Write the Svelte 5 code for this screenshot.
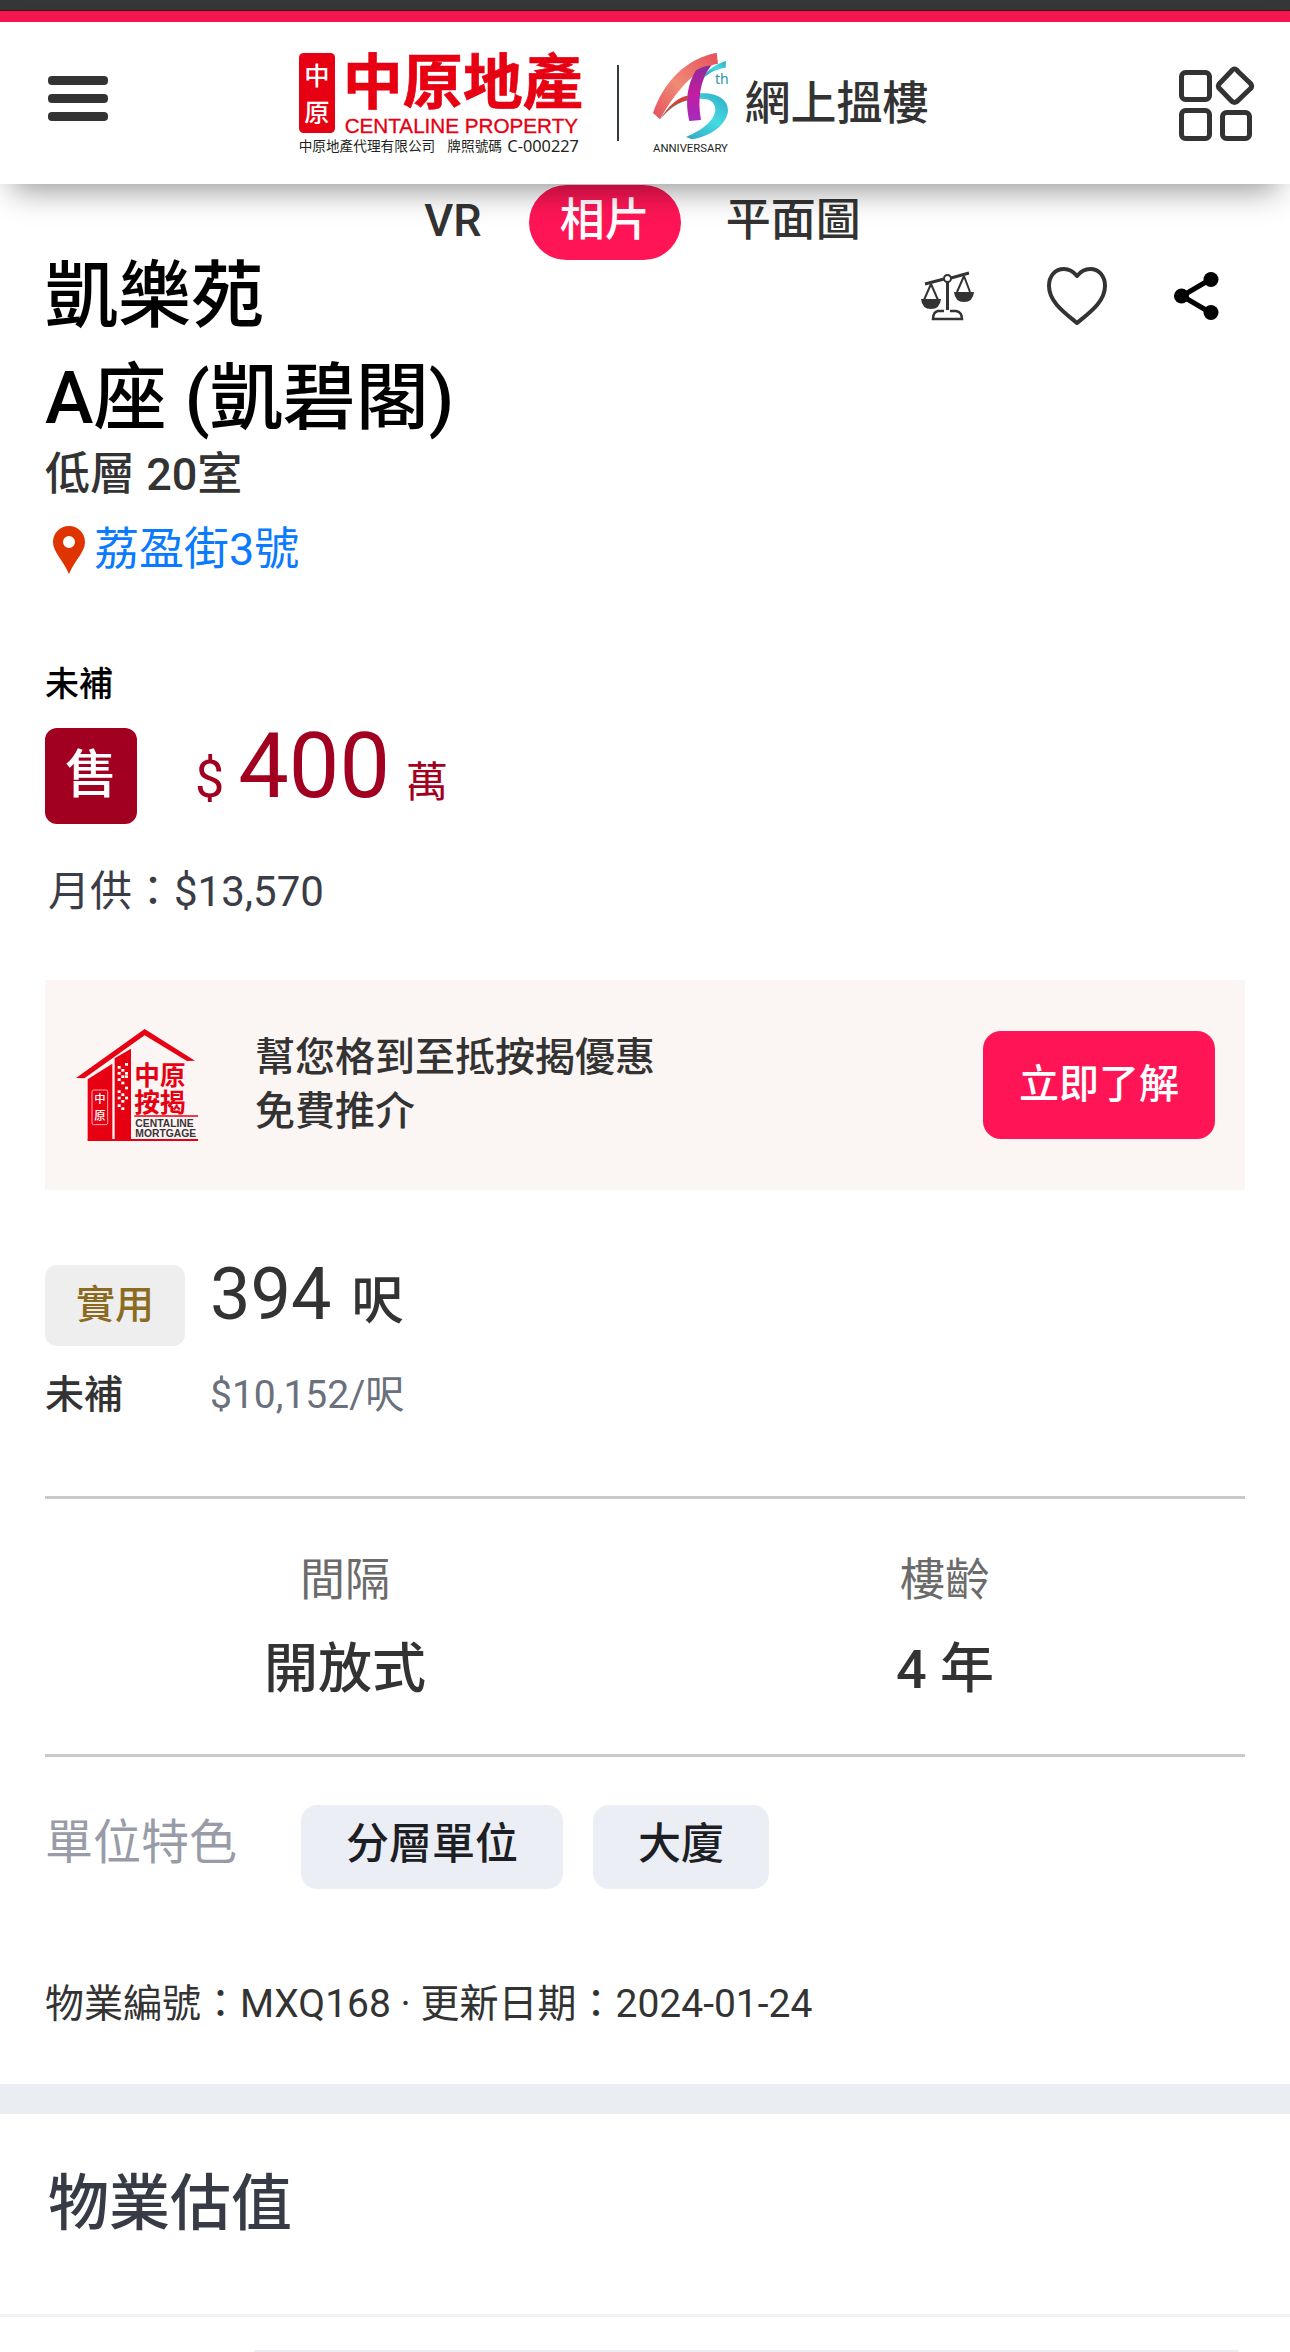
<script>
  const tabs = [
    { label: 'VR', active: false },
    { label: '相片', active: true },
    { label: '平面圖', active: false }
  ];
  const stats = [
    { label: '間隔', value: '開放式' },
    { label: '樓齡', value: '4 年' }
  ];
  const features = ['分層單位', '大廈'];
  const windows = [
    [254, 279], [232, 288], [243, 297], [254, 306], [254, 316], [232, 306],
    [243, 316], [232, 325], [243, 335], [254, 350], [232, 361], [243, 370],
    [232, 380], [254, 380], [243, 390], [232, 403], [243, 412]
  ];
</script>

<main lang="zh-HK">
  <div class="status"></div>
  <header>
    <button class="plain" aria-label="選單">
      <svg width="60" height="54" viewBox="0 0 60 54" fill="#333">
        <rect width="60" height="9" rx="4" />
        <rect y="18" width="60" height="9" rx="4" />
        <rect y="36" width="60" height="9" rx="4" />
      </svg>
    </button>

    <a class="brand" href="#home" aria-label="中原地產">
      <svg width="281" height="100" viewBox="57 42 843 300">
        <rect x="57" y="42" width="108" height="240" rx="14" fill="#e60012" />
        <g fill="#fff" font-size="76" text-anchor="middle" class="cjk" font-weight="500">
          <text x="111" y="139">中</text>
          <text x="111" y="250">原</text>
        </g>
        <text class="cjk" x="188" y="194" font-size="180" font-weight="700" fill="#e60012" stroke="#e60012" stroke-width="2">中原地產</text>
        <text class="latin" x="194" y="281" font-size="62" fill="#e60012" stroke="#e60012" stroke-width="1">CENTALINE PROPERTY</text>
        <g fill="#231f20" class="cjk">
          <text x="56" y="337" font-size="41">中原地產代理有限公司</text>
          <text x="502" y="337" font-size="41">牌照號碼</text>
          <text class="noto" x="682" y="339" font-size="49">C-000227</text>
        </g>
      </svg>
      <span class="divider"></span>
      <svg width="76" height="100" viewBox="99 42 228 300">
        <defs>
          <linearGradient id="red" x1="0" y1="1" x2="1" y2="0">
            <stop offset="0" stop-color="#e4505c" />
            <stop offset="0.45" stop-color="#f08a76" />
            <stop offset="1" stop-color="#e4505a" />
          </linearGradient>
          <linearGradient id="teal" x1="0" y1="1" x2="1" y2="0">
            <stop offset="0" stop-color="#2590b4" />
            <stop offset="0.6" stop-color="#45dbe2" />
            <stop offset="1" stop-color="#2fa9c4" />
          </linearGradient>
          <linearGradient id="purple" x1="0" y1="0" x2="0" y2="1">
            <stop offset="0" stop-color="#8d2a9c" />
            <stop offset="0.5" stop-color="#c31d9e" />
            <stop offset="1" stop-color="#a42bc0" />
          </linearGradient>
        </defs>
        <path d="M122 238C150 196 180 168 240 163C292 160 324 182 324 214C322 258 268 294 215 301L198 294C250 272 286 242 286 210C284 184 262 176 228 180C190 184 160 196 122 238Z" fill="url(#teal)" />
        <path d="M122 239C148 198 172 176 202 170V184C172 190 148 208 122 239Z" fill="#d8402f" />
        <path d="M99 222C132 126 200 58 290 41L294 74C236 84 176 140 120 241Z" fill="url(#red)" />
        <path d="M228 94Q248 82 274 79C240 122 232 182 243 243L208 246C194 190 202 134 228 94Z" fill="url(#purple)" />
        <path d="M250 118C258 94 290 74 318 66L317 86C290 90 268 100 250 118Z" fill="url(#teal)" />
        <text class="noto" x="285" y="135" font-size="42" fill="#2b93ad">th</text>
        <text class="roboto" x="99" y="340" font-size="34" fill="#231f20">ANNIVERSARY</text>
      </svg>
      <span class="site">網上搵樓</span>
    </a>

    <button class="plain" aria-label="更多服務">
      <svg width="75" height="75" viewBox="0 0 75 75" fill="none" stroke="#333" stroke-width="5">
        <rect x="2.500" y="6.500" width="28" height="27" rx="4" />
        <path d="M52 5.500Q55.500 0.500 59 5.500L71 17Q74.500 20 71 23L59 34.500Q55.500 38.500 52 34.500L41 23Q37.500 20 41 17Z" stroke-linejoin="round" />
        <rect x="2.500" y="44.500" width="28" height="28" rx="4" />
        <rect x="43.500" y="46.500" width="27" height="26" rx="4" />
      </svg>
    </button>
  </header>

  <nav class="tabs">
    {#each tabs as tab}
      <button class="tab" class:active={tab.active}>{tab.label}</button>
    {/each}
  </nav>

  <section class="listing">
    <div class="title-row">
      <h1><span>凱樂苑</span><span>A座 (凱碧閣)</span></h1>
      <div class="actions">
        <button class="plain" aria-label="比較">
          <svg width="60" height="49" viewBox="0 0 60 49" fill="none" stroke="#333" stroke-width="2">
            <path d="M5 12L24 7M31 6L49 1" stroke-width="3" />
            <circle cx="27.500" cy="6.500" r="3.500" />
            <path d="M27.500 10V38" stroke-width="3" />
            <path d="M11 12L4 28M11 12L18 28M44 4L37 20M44 4L50 20" />
            <path d="M1 27H21Q20 37 11 37Q2 37 1 27Z" fill="#333" stroke="none" />
            <path d="M34 20H54Q53 30 44 30Q35 30 34 20Z" fill="#333" stroke="none" />
            <path d="M24 39H18Q13 40 13 47H42Q42 40 36 39H30" stroke-width="2.500" />
          </svg>
        </button>
        <button class="plain" aria-label="收藏">
          <svg width="60" height="58" viewBox="0 0 60 58" fill="none" stroke="#333" stroke-width="4" stroke-linejoin="round">
            <path d="M30 9C26 4 22 2 17 2C8 2 2 9 2 19C2 35 18 46 30 56C42 46 58 35 58 19C58 9 52 2 43 2C38 2 34 4 30 9Z" />
          </svg>
        </button>
        <button class="plain" aria-label="分享">
          <svg width="45" height="48" viewBox="0 0 45 48">
            <path d="M37 7L8 24L37 41" fill="none" stroke="#000" stroke-width="5" />
            <circle cx="7.500" cy="24" r="7.500" /><circle cx="37" cy="7.500" r="7.500" /><circle cx="37" cy="40.500" r="7.500" />
          </svg>
        </button>
      </div>
    </div>
    <p class="floor">低層 20室</p>
    <a class="address" href="#map">
      <svg width="32" height="48" viewBox="0 0 32 48">
        <path fill-rule="evenodd" fill="#e03400" d="M16 0C7 0 0 7 0 16C0 26 10 34 16 48C22 34 32 26 32 16C32 7 25 0 16 0ZM16 10A6 6 0 1 1 16 22A6 6 0 1 1 16 10Z" />
      </svg>
      <span>荔盈街3號</span>
    </a>

    <p class="note">未補</p>
    <div class="price-row">
      <span class="sale">售</span>
      <p class="price"><span class="sign">$</span><strong>400</strong><span class="unit">萬</span></p>
    </div>
    <p class="monthly">月供：$13,570</p>

    <aside>
      <svg class="mortgage" width="122" height="113" viewBox="107 177 366 339">
        <g fill="#e60012">
          <path d="M107 324L313 177L464 272L440 273L313 196L132 325Z" />
          <path d="M142 328L216 281V510H142Z" />
          <path d="M223 265L272 236V510H223Z" />
          <path d="M142 507H473V513H142ZM282 436H473V440H282Z" />
          <g class="cjk" font-size="77" font-weight="700">
            <text x="282" y="346">中原</text>
            <text x="282" y="425">按揭</text>
          </g>
        </g>
        <rect x="155" y="360" width="47" height="104" rx="5" fill="none" stroke="#fff" stroke-width="2" />
        <g fill="#fff" class="cjk" font-size="34" text-anchor="middle">
          <text x="179" y="400">中</text>
          <text x="179" y="450">原</text>
        </g>
        <g fill="#fff">
          {#each windows as [x, y]}
            <rect {x} {y} width="9" height="8" />
          {/each}
        </g>
        <g class="latin" fill="#3b3334" font-weight="700" font-size="31">
          <text x="285" y="470">CENTALINE</text>
          <text x="285" y="500">MORTGAGE</text>
        </g>
      </svg>
      <p>幫您格到至抵按揭優惠<br />免費推介</p>
      <button class="cta">立即了解</button>
    </aside>

    <div class="area">
      <span class="badge">實用</span>
      <p class="size"><span>394</span><b>呎</b></p>
      <span class="unpaid">未補</span>
      <span class="rate">$10,152/呎</span>
    </div>

    <dl class="stats">
      {#each stats as stat}
        <div>
          <dt>{stat.label}</dt>
          <dd>{stat.value}</dd>
        </div>
      {/each}
    </dl>

    <div class="features">
      <span class="heading">單位特色</span>
      {#each features as feature}
        <span class="chip">{feature}</span>
      {/each}
    </div>

    <p class="info">物業編號：MXQ168 · 更新日期：2024-01-24</p>
  </section>

  <section class="valuation">
    <h2>物業估值</h2>
    <div class="panel"><div class="card"></div></div>
  </section>
</main>

<style>
  :global(body) {
    background: #fff;
  }
  main {
    display: flex;
    flex-direction: column;
    min-height: 100vh;
    color: #333;
    font-family: Roboto, 'Noto Sans CJK TC', sans-serif;
    font-size: 45px;
    line-height: 60px;
  }
  h1, h2, p, dl, dd {
    margin: 0;
  }
  button {
    font: inherit;
    color: inherit;
    border: 0;
    padding: 0;
    background: none;
  }
  svg {
    display: block;
    flex: none;
    overflow: visible;
  }
  a {
    text-decoration: none;
  }
  .cjk { font-family: 'Noto Sans CJK TC', sans-serif; }
  .latin { font-family: 'Liberation Sans', sans-serif; }
  .noto { font-family: 'Noto Sans', sans-serif; }
  .roboto { font-family: Roboto, sans-serif; }

  .status {
    height: 10px;
    background: #343637;
    border-bottom: 1px solid #4a0a18;
  }
  header {
    position: relative;
    display: flex;
    align-items: center;
    justify-content: space-between;
    height: 162px;
    padding: 0 36px 0 48px;
    border-top: 11px solid #f5164f;
    background: #fff;
    box-shadow: 0 18px 30px -12px rgba(0, 0, 0, 0.42);
  }
  .brand {
    display: flex;
    align-items: center;
    padding-right: 60px;
    color: #333;
  }
  .divider {
    width: 2px;
    height: 76px;
    margin: 0 34px 0 37px;
    background: #333b40;
  }
  .site {
    margin-left: 16px;
    font-weight: 500;
    font-size: 46px;
  }

  .tabs {
    display: flex;
    justify-content: center;
    padding: 1px 5px 0 0;
  }
  .tab {
    height: 75px;
    padding: 0 31px 4px;
    border-radius: 38px;
    font-size: 45px;
    font-weight: 500;
  }
  .tab:first-child {
    margin-right: 16px;
  }
  .tab:last-child {
    margin-left: 14px;
  }
  .tab.active {
    background: #ff1555;
    color: #fff;
  }

  .listing {
    padding: 0 45px 50px;
  }
  .title-row {
    display: flex;
    justify-content: space-between;
    align-items: flex-start;
  }
  h1 {
    display: flex;
    flex-direction: column;
    gap: 30px;
    color: #000;
    font-size: 73px;
    line-height: 72px;
    font-weight: 500;
  }
  .actions {
    display: flex;
    align-items: center;
    gap: 67px;
    height: 72px;
    padding-right: 26px;
  }
  .floor {
    margin-top: 11px;
    font-weight: 500;
  }
  .address {
    display: flex;
    align-items: center;
    gap: 9px;
    margin-top: 15px;
    padding-left: 8px;
    color: #0a7aff;
  }
  .note {
    margin-top: 84px;
    color: #000;
    font-size: 34px;
    line-height: 40px;
    font-weight: 500;
  }
  .price-row {
    display: flex;
    gap: 58px;
    height: 96px;
    margin-top: 24px;
  }
  .sale {
    width: 92px;
    border-radius: 12px;
    background: #a20021;
    color: #fff;
    font-size: 52px;
    line-height: 96px;
    font-weight: 500;
    text-align: center;
  }
  .price {
    display: flex;
    align-items: baseline;
    color: #a20021;
    line-height: 78px;
  }
  .sign {
    font-size: 52px;
  }
  .price strong {
    margin: 0 16px 0 14px;
    font-size: 90px;
    font-weight: 400;
  }
  .unit {
    font-size: 42px;
  }
  .monthly {
    margin: 38px 0 -2px;
    padding-left: 3px;
    color: #3a3d46;
    font-size: 42px;
  }

  aside {
    display: flex;
    align-items: center;
    height: 210px;
    margin-top: 60px;
    padding: 0 30px 0 31px;
    background: #fbf5f4;
    font-size: 40px;
    font-weight: 500;
    line-height: 54px;
  }
  aside p {
    flex: 1;
    margin-left: 57px;
  }
  .cta {
    height: 108px;
    padding: 0 36px;
    border-radius: 18px;
    background: #ff1555;
    color: #fff;
  }

  .area {
    display: grid;
    grid-template-columns: 140px 1fr;
    column-gap: 25px;
    row-gap: 19px;
    margin-top: 75px;
    font-size: 39px;
  }
  .badge {
    height: 81px;
    border-radius: 12px;
    background: #eee;
    color: #8b6b22;
    font-weight: 500;
    line-height: 80px;
    text-align: center;
  }
  .size {
    display: flex;
    align-items: baseline;
    gap: 20px;
    font-size: 72px;
  }
  .size b {
    font-size: 52px;
    font-weight: 500;
  }
  .unpaid {
    font-weight: 500;
  }
  .rate {
    color: #6a707c;
  }

  .stats {
    display: grid;
    grid-template-columns: 1fr 1fr;
    margin-top: 71px;
    padding: 52px 0 45px;
    border-top: 3px solid #cacaca;
    border-bottom: 3px solid #cacaca;
    text-align: center;
  }
  dt {
    color: #6b6b6b;
    font-size: 45px;
  }
  dd {
    margin-top: 20px;
    font-size: 54px;
    font-weight: 500;
    line-height: 78px;
  }

  .features {
    display: flex;
    align-items: flex-start;
    gap: 30px;
    margin-top: 48px;
  }
  .heading {
    margin-right: 34px;
    color: #989ca8;
    font-size: 48px;
    line-height: 75px;
  }
  .chip {
    height: 84px;
    padding: 0 45px;
    border-radius: 16px;
    background: #ebeef4;
    color: #1d1f24;
    font-size: 43px;
    font-weight: 500;
    line-height: 79px;
  }
  .info {
    margin-top: 85px;
    font-size: 39px;
  }

  .valuation {
    display: flex;
    flex: 1;
    flex-direction: column;
    border-top: 30px solid #eaedf2;
  }
  h2 {
    padding: 50px 48px 70px;
    border-bottom: 3px solid #f0f2f3;
    color: #373b45;
    font-size: 61px;
    line-height: 80px;
    font-weight: 500;
  }
  .panel {
    display: flex;
    flex: 1;
    padding: 33px 51px 0 254px;
  }
  .card {
    flex: 1;
    border-radius: 6px 6px 0 0;
    background: #eaedf4;
  }
</style>
